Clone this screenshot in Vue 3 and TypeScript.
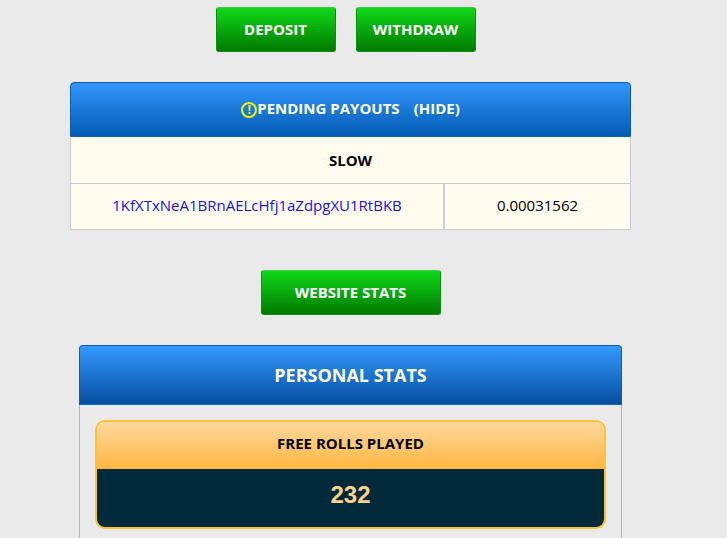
<template>
  <div class="page">
    <div class="actions">
      <button class="green-btn" type="button"><span>DEPOSIT</span></button>
      <button class="green-btn" type="button"><span>WITHDRAW</span></button>
    </div>

    <div class="payouts">
      <div class="payouts-head">
        <span class="warn">!</span><span>PENDING PAYOUTS</span><span class="hide">(HIDE)</span>
      </div>
      <div class="speed">SLOW</div>
      <div class="payout-row">
        <a class="address">{{ payout.address }}</a>
        <div class="amount">{{ payout.amount }}</div>
      </div>
    </div>

    <div class="stats-action">
      <button class="green-btn wide" type="button"><span>WEBSITE STATS</span></button>
    </div>

    <div class="personal">
      <div class="personal-head">PERSONAL STATS</div>
      <div class="personal-body">
        <div class="stat-card">
          <div class="stat-title">FREE ROLLS PLAYED</div>
          <div class="stat-value">232</div>
        </div>
      </div>
    </div>
  </div>
</template>

<script setup lang="ts">
const payout = {
  address: '1KfXTxNeA1BRnAELcHfj1aZdpgXU1RtBKB',
  amount: '0.00031562',
};
</script>

<style>
html,
body {
  height: 100%;
  overflow: hidden;
  background-color: #ebebeb;
  background-image:
    linear-gradient(45deg, #e8e8e8 25%, transparent 25%, transparent 75%, #e8e8e8 75%),
    linear-gradient(45deg, #e8e8e8 25%, transparent 25%, transparent 75%, #e8e8e8 75%);
  background-size: 4px 4px;
  background-position: 0 0, 2px 2px;
}
</style>

<style scoped>
.page {
  width: 701px;
  height: 538px;
  overflow: hidden;
  display: flex;
  flex-direction: column;
  align-items: center;
  padding-top: 7px;
  box-sizing: border-box;
  font-family: "Open Sans", sans-serif;
  color: #000;
}

.actions {
  display: flex;
  gap: 20px;
  margin-right: 10px;
}

.green-btn {
  width: 120px;
  height: 45px;
  padding: 0 0 2px;
  border: 1px solid #0a8f10;
  border-top-color: #3fc447;
  border-radius: 3px;
  background: linear-gradient(to bottom, #10d819, #007a00);
  color: #fff;
  font-family: inherit;
  font-size: 15px;
  font-weight: 700;
}

.green-btn.wide {
  width: 180px;
}

.payouts {
  width: 561px;
  margin-top: 30px;
  box-sizing: border-box;
}

.payouts-head {
  display: flex;
  justify-content: center;
  align-items: center;
  height: 55px;
  padding-bottom: 3px;
  box-sizing: border-box;
  border: 1px solid #0a5cb5;
  border-radius: 4px 4px 0 0;
  background: linear-gradient(to bottom, #3395fb, #045cb4);
  color: #fff;
  font-size: 15px;
  font-weight: 700;
}

.warn {
  display: inline-flex;
  align-items: center;
  justify-content: center;
  width: 16px;
  height: 16px;
  margin-top: 3px;
  box-sizing: border-box;
  border: 2px solid #f2f200;
  border-radius: 50%;
  color: #f2f200;
  font-size: 12px;
  line-height: 1;
}

.hide {
  margin-left: 14px;
}

.speed {
  height: 47px;
  padding-bottom: 1px;
  box-sizing: border-box;
  display: flex;
  align-items: center;
  justify-content: center;
  background: #fefcee;
  border: 1px solid #cdcdcd;
  border-top: 0;
  font-size: 15px;
  font-weight: 700;
}

.payout-row {
  display: grid;
  grid-template-columns: 374px 1fr;
  height: 46px;
  box-sizing: border-box;
  background: #fefcee;
  border: 1px solid #cdcdcd;
  border-top: 0;
  font-size: 15px;
}

.address,
.amount {
  display: flex;
  align-items: center;
  justify-content: center;
  padding-bottom: 3px;
}

.address {
  color: #2010f0;
  border-right: 2px solid #cdcdcd;
}

.stats-action {
  margin-top: 40px;
}

.personal {
  width: 543px;
  margin-top: 30px;
  flex-shrink: 0;
}

.personal-head {
  height: 60px;
  box-sizing: border-box;
  display: flex;
  align-items: center;
  justify-content: center;
  border: 1px solid #0a5cb5;
  border-bottom-color: #0a6ad0;
  border-radius: 4px 4px 0 0;
  background: linear-gradient(to bottom, #3399ff, #064fa0);
  color: #fff;
  font-size: 18px;
  font-weight: 700;
}

.personal-body {
  padding: 15px 15px 20px;
  border: 1px solid #b4b4b4;
  border-top: 0;
}

.stat-card {
  height: 109px;
  box-sizing: border-box;
  border: 2px solid #fdc232;
  border-radius: 10px;
  overflow: hidden;
}

.stat-title {
  height: 47px;
  padding-bottom: 5px;
  box-sizing: border-box;
  display: flex;
  align-items: center;
  justify-content: center;
  background: linear-gradient(to bottom, #fed89e, #feb640);
  font-size: 15px;
  font-weight: 700;
}

.stat-value {
  height: 58px;
  padding-bottom: 6px;
  box-sizing: border-box;
  display: flex;
  align-items: center;
  justify-content: center;
  background: #022a3a;
  color: #fdd28a;
  font-family: "Liberation Sans", Arial, sans-serif;
  font-size: 24px;
  font-weight: 700;
}
</style>
